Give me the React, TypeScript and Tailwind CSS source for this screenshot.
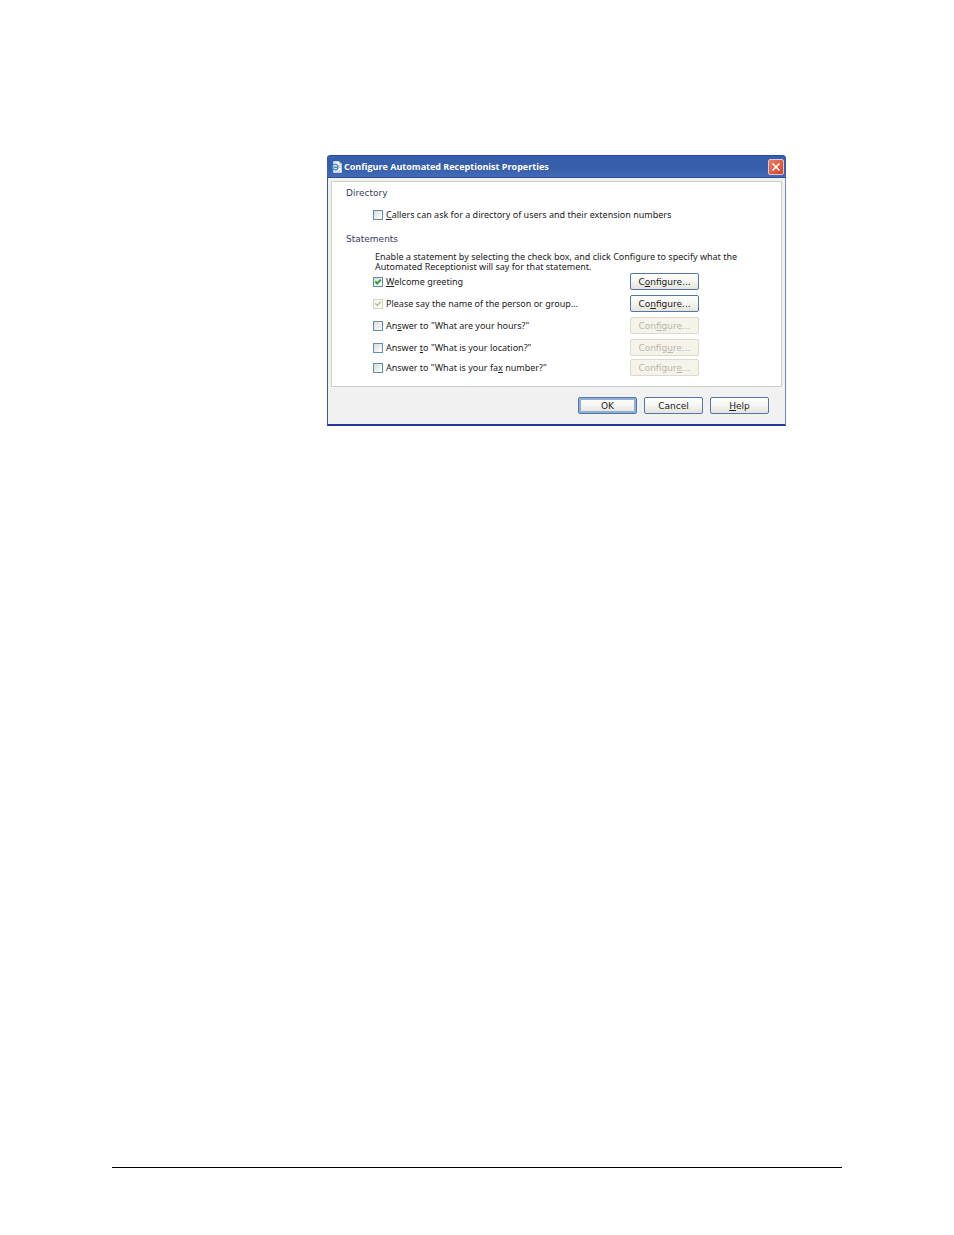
import React, { useState } from 'react';

interface Statement {
  id: string;
  label: [string, string, string];
  button: [string, string, string];
  checked: boolean;
  locked?: boolean;
}

// Each text is split around its access key: before, key, after
const initialStatements: Statement[] = [
  { id: 'welcome', label: ['', 'W', 'elcome greeting'], button: ['C', 'o', 'nfigure...'], checked: true },
  {
    id: 'name',
    label: ['Please say the name of the person or group...', '', ''],
    button: ['Co', 'n', 'figure...'],
    checked: true,
    locked: true
  },
  { id: 'hours', label: ['An', 's', 'wer to "What are your hours?"'], button: ['Con', 'f', 'igure...'], checked: false },
  { id: 'location', label: ['Answer ', 't', 'o "What is your location?"'], button: ['Config', 'u', 're...'], checked: false },
  { id: 'fax', label: ['Answer to "What is your fa', 'x', ' number?"'], button: ['Configur', 'e', '...'], checked: false }
];

const KeyText: React.FC<{ parts: [string, string, string] }> = ({ parts }) => (
  <span className="whitespace-pre">
    {parts[0]}
    {parts[1] && <u className="underline-offset-1">{parts[1]}</u>}
    {parts[2]}
  </span>
);

interface CheckBoxProps {
  id: string;
  label: [string, string, string];
  checked: boolean;
  disabled?: boolean;
  onChange: (checked: boolean) => void;
}

const CheckBox: React.FC<CheckBoxProps> = ({ id, label, checked, disabled, onChange }) => (
  <div className="flex items-center gap-[3px]">
    <span className="relative flex">
      <input
        id={id}
        type="checkbox"
        checked={checked}
        disabled={disabled}
        onChange={(e) => onChange(e.target.checked)}
        className="size-[10px] appearance-none border border-[#5f8db5] bg-gradient-to-br from-[#dcdcd6] to-white disabled:border-[#d5d3c4] disabled:from-[#f8f7f1] disabled:to-[#f8f7f1]"
      />
      {checked && (
        <svg viewBox="0 0 10 10" className="pointer-events-none absolute inset-0 size-[10px]">
          <path
            d="M2.3 4.4 L4.2 6.5 L7.8 2.6"
            fill="none"
            stroke={disabled ? '#b5b5a2' : '#24a73a'}
            strokeWidth={disabled ? 1.3 : 1.9}
          />
        </svg>
      )}
    </span>
    <label htmlFor={id} className="font-['Noto_Sans',sans-serif] text-[9px] leading-[12px] text-[#222222]">
      <KeyText parts={label} />
    </label>
  </div>
);

interface XpButtonProps {
  parts: [string, string, string];
  disabled?: boolean;
  isDefault?: boolean;
  wide?: boolean;
}

const XpButton: React.FC<XpButtonProps> = ({ parts, disabled, isDefault, wide }) => (
  <button
    type="button"
    disabled={disabled}
    className={`flex h-[17px] shrink-0 items-center justify-center rounded-[2px] border border-[#5378a8] bg-gradient-to-b from-white via-[#f5f5f1] to-[#e4e3dc] text-[9px] leading-[12px] text-[#222222] disabled:border-[#dddacb] disabled:from-[#f5f3ea] disabled:via-[#f5f3ea] disabled:to-[#f5f3ea] disabled:text-[#b9b8ac] ${
      wide ? 'w-[69px]' : 'w-[59px]'
    } ${isDefault ? 'ring-2 ring-inset ring-[#91add9]' : ''}`}
  >
    <KeyText parts={parts} />
  </button>
);

export default function App() {
  const [directory, setDirectory] = useState(false);
  const [statements, setStatements] = useState<Statement[]>(initialStatements);

  const setChecked = (id: string, checked: boolean) => {
    setStatements((prev) => prev.map((s) => (s.id === id ? { ...s, checked } : s)));
  };

  return (
    <div className="flex min-h-screen flex-col justify-between bg-white px-28 pt-[155px] pb-[67px] font-['DejaVu_Sans',sans-serif]">
      <section
        role="dialog"
        aria-labelledby="dialog-title"
        className="mr-14 ml-[215px] rounded-t-[4px] border-x border-b-2 border-r-[#7485c6] border-b-[#22399b] border-l-[#3d57b0] bg-[#f1f1f1]"
      >
        {/* Title bar */}
        <header className="-mx-px flex h-[23px] items-center justify-between rounded-t-[4px] border-t border-b border-t-[#2448a0] border-b-[#294c9e] bg-gradient-to-b from-[#3560b0] via-[#365da9] to-[#416bb8] pr-[2px] pl-1">
          <div className="flex items-center gap-[2px]">
            <svg viewBox="0 0 11 12" className="h-[12px] w-[11px]">
              <path d="M2.5 .5 H8 L10.5 3 V11.5 H2.5 Z" fill="#f7f6ec" stroke="#e2e4e6" strokeWidth=".6" />
              <path d="M8 .5 V3 H10.5" fill="#b9c2cd" />
              <path d="M7.5 4.5 H9.5 M7.5 6.5 H9.5 M4 10 H9" stroke="#aab3bd" strokeWidth=".7" />
              <circle cx="4.2" cy="6" r="2.8" fill="#d3eaf7" stroke="#3f8ac6" strokeWidth="1.2" />
              <path d="M2.4 6.2 H6.4" stroke="#23659f" strokeWidth="1" />
            </svg>
            <h1 id="dialog-title" className="font-['Open_Sans',sans-serif] text-[9px] leading-[12px] font-bold whitespace-nowrap text-white">
              Configure Automated Receptionist Properties
            </h1>
          </div>
          <button
            type="button"
            aria-label="Close"
            className="flex size-4 items-center justify-center rounded-[2px] border border-[#e3c5cf] bg-gradient-to-br from-[#ea8064] to-[#d2401c]"
          >
            <svg viewBox="0 0 10 10" className="size-[10px]">
              <path d="M1.5 1.5 L8.5 8.5 M8.5 1.5 L1.5 8.5" stroke="#ffffff" strokeWidth="1.6" />
            </svg>
          </button>
        </header>

        {/* Options */}
        <div className="mx-[3px] mt-[3px] border border-[#cfcfcf] bg-white pt-[5px] pb-[10px] pl-[14px]">
          <h2 className="text-[9px] leading-[12px] text-[#3b3b63]">Directory</h2>
          <div className="mt-[10px] pl-[27px]">
            <CheckBox
              id="directory"
              label={['', 'C', 'allers can ask for a directory of users and their extension numbers']}
              checked={directory}
              onChange={setDirectory}
            />
          </div>

          <h2 className="mt-[12px] text-[9px] leading-[12px] text-[#3b3b63]">Statements</h2>
          <p className="mt-[7px] pl-[29px] font-['Noto_Sans',sans-serif] text-[9px] leading-[10px] whitespace-nowrap text-[#222222]">
            Enable a statement by selecting the check box, and click Configure to specify what the
            <br />
            Automated Receptionist will say for that statement.
          </p>
          <ul className="mt-px space-y-[5px] pr-[82px] pl-[27px]">
            {statements.map((s) => (
              <li key={s.id} className="flex items-center justify-between last:-mt-[2px]">
                <CheckBox
                  id={s.id}
                  label={s.label}
                  checked={s.checked}
                  disabled={s.locked}
                  onChange={(checked) => setChecked(s.id, checked)}
                />
                <XpButton parts={s.button} disabled={!s.checked} wide />
              </li>
            ))}
          </ul>
        </div>

        <footer className="flex justify-end gap-[7px] pt-[10px] pr-4 pb-[10px]">
          <XpButton parts={['OK', '', '']} isDefault />
          <XpButton parts={['Cancel', '', '']} />
          <XpButton parts={['', 'H', 'elp']} />
        </footer>
      </section>

      <hr className="border-t border-black" />
    </div>
  );
}
